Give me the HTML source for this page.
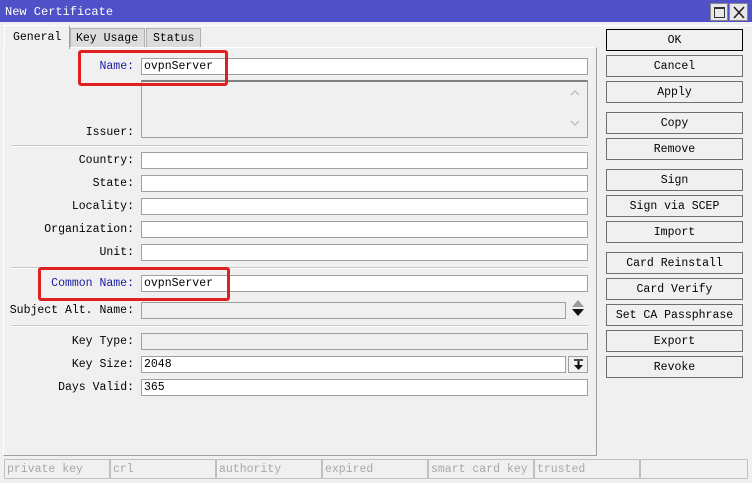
<!DOCTYPE html>
<html><head><style>
*{margin:0;padding:0;box-sizing:border-box}
body{width:752px;height:483px;background:#f0f0f0;position:relative;overflow:hidden;font-family:"Liberation Mono","Noto Sans CJK SC",monospace;font-size:11.5px;color:#000}
.a{position:absolute}
.in{position:absolute;background:#fff;border:1px solid #a0a0a0;height:17px;padding-left:2px;line-height:16px}
.dis{background:#f0f0f0}
.lb{position:absolute;right:618px;text-align:right;line-height:18px;white-space:nowrap}
.btn{position:absolute;left:606px;width:137px;height:22px;border:1px solid #707070;background:#f0f0f0;text-align:center;line-height:21px}
.sep{position:absolute;left:11px;width:577px;height:2px;border-top:1px solid #c8c8c8;border-bottom:1px solid #fff}
.red{position:absolute;border:3px solid #e02020;border-radius:3px}
.sc{position:absolute;top:459px;height:20px;border:1px solid #c0c0c0;color:#a8a8a8;padding-left:2px;line-height:19px;width:106px}
</style></head><body>
<div class="a" style="left:0;top:0;width:752px;height:22px;background:#5050c8"></div>
<div class="a" style="left:5px;top:4px;color:#fff;font-size:12px;line-height:16px">New Certificate</div>
<div class="a" style="left:710px;top:3px;width:18px;height:18px;background:#e8e8e8;border:1px solid #888"><div class="a" style="left:3px;top:3px;width:11px;height:11px;border:1px solid #333;border-top-width:2px"></div></div>
<div class="a" style="left:729px;top:3px;width:19px;height:18px;background:#e8e8e8;border:1px solid #888"><svg class="a" style="left:2px;top:2px" width="14" height="13"><path d="M2 1L12 12M12 1L2 12" stroke="#222" stroke-width="1.6"/></svg></div>
<div class="a" style="left:3px;top:25px;width:749px;height:1px;background:#fff"></div>
<div class="a" style="left:70px;top:28px;width:75px;height:20px;background:#dcdcdc;border:1px solid #b0b0b0;line-height:20px;padding-left:5px">Key Usage</div>
<div class="a" style="left:146px;top:28px;width:55px;height:20px;background:#dcdcdc;border:1px solid #b0b0b0;line-height:20px;padding-left:6px">Status</div>
<div class="a" style="left:3px;top:47px;width:594px;height:409px;border:1px solid #a0a0a0;border-top-color:#fff;border-left-color:#fff"></div>
<div class="a" style="left:4px;top:25px;width:66px;height:24px;background:#f0f0f0;border:1px solid #fff;border-bottom:none;border-right:1px solid #a0a0a0;line-height:24px;padding-left:8px">General</div>
<div class="lb" style="top:58px;color:#1a1aa0">Name:</div><div class="in" style="left:141px;top:58px;width:447px">ovpnServer</div>
<div class="a" style="left:141px;top:80px;width:447px;height:58px;border:1px solid #a0a0a0;border-top:2px solid #808080;background:#f0f0f0"></div>
<svg class="a" style="left:569px;top:88px" width="12" height="40"><path d="M2 7L6 3L10 7M2 33L6 37L10 33" stroke="#c0c0c0" stroke-width="1.3" fill="none"/></svg>
<div class="lb" style="top:124px">Issuer:</div>
<div class="sep" style="top:145px"></div>
<div class="lb" style="top:152px">Country:</div><div class="in" style="left:141px;top:152px;width:447px"></div>
<div class="lb" style="top:175px">State:</div><div class="in" style="left:141px;top:175px;width:447px"></div>
<div class="lb" style="top:198px">Locality:</div><div class="in" style="left:141px;top:198px;width:447px"></div>
<div class="lb" style="top:221px">Organization:</div><div class="in" style="left:141px;top:221px;width:447px"></div>
<div class="lb" style="top:244px">Unit:</div><div class="in" style="left:141px;top:244px;width:447px"></div>
<div class="sep" style="top:267px"></div>
<div class="lb" style="top:275px;color:#1a1aa0">Common Name:</div><div class="in" style="left:141px;top:275px;width:447px">ovpnServer</div>
<div class="lb" style="top:302px">Subject Alt. Name:</div><div class="in dis" style="left:141px;top:302px;width:425px"></div>
<div class="a" style="left:572px;top:300px;width:0;height:0;border-left:6px solid transparent;border-right:6px solid transparent;border-bottom:7px solid #999"></div>
<div class="a" style="left:572px;top:309px;width:0;height:0;border-left:6px solid transparent;border-right:6px solid transparent;border-top:7px solid #111"></div>
<div class="sep" style="top:325px"></div>
<div class="lb" style="top:333px">Key Type:</div><div class="in dis" style="left:141px;top:333px;width:447px"></div>
<div class="lb" style="top:356px">Key Size:</div><div class="in" style="left:141px;top:356px;width:425px">2048</div>
<div class="a" style="left:568px;top:356px;width:20px;height:17px;border:1px solid #a0a0a0;background:#f0f0f0"><svg class="a" style="left:4px;top:2px" width="11" height="12"><path d="M1 1H10" stroke="#111" stroke-width="1.5"/><path d="M5.5 2V7" stroke="#111" stroke-width="2"/><path d="M1 6H10L5.5 11Z" fill="#111"/></svg></div>
<div class="lb" style="top:379px">Days Valid:</div><div class="in" style="left:141px;top:379px;width:447px">365</div>
<div class="red" style="left:78px;top:50px;width:150px;height:36px"></div>
<div class="red" style="left:38px;top:267px;width:192px;height:34px"></div>
<div class="btn" style="top:29px;border-color:#000">OK</div>
<div class="btn" style="top:55px">Cancel</div>
<div class="btn" style="top:81px">Apply</div>
<div class="btn" style="top:112px">Copy</div>
<div class="btn" style="top:138px">Remove</div>
<div class="btn" style="top:169px">Sign</div>
<div class="btn" style="top:195px">Sign via SCEP</div>
<div class="btn" style="top:221px">Import</div>
<div class="btn" style="top:252px">Card Reinstall</div>
<div class="btn" style="top:278px">Card Verify</div>
<div class="btn" style="top:304px">Set CA Passphrase</div>
<div class="btn" style="top:330px">Export</div>
<div class="btn" style="top:356px">Revoke</div>
<div class="sc" style="left:4px">private key</div>
<div class="sc" style="left:110px">crl</div>
<div class="sc" style="left:216px">authority</div>
<div class="sc" style="left:322px">expired</div>
<div class="sc" style="left:428px">smart card key</div>
<div class="sc" style="left:534px">trusted</div>
<div class="sc" style="left:640px;width:108px"></div>
</body></html>
